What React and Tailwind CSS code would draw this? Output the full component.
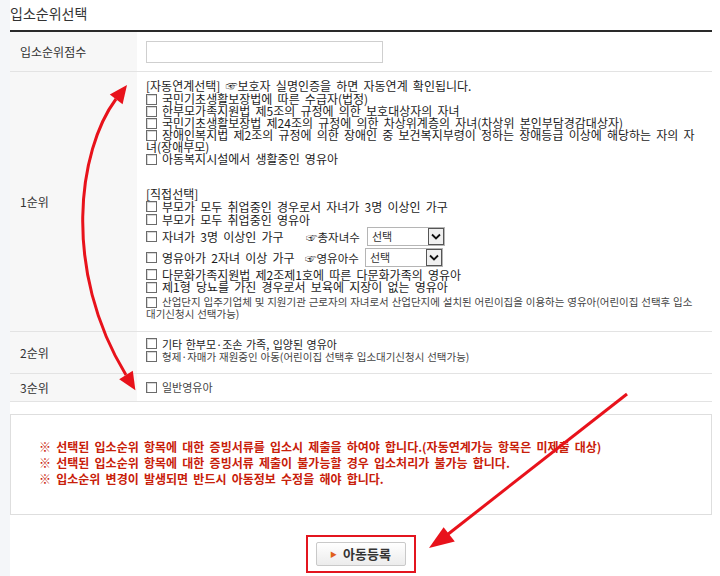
import React from 'react';

function Cb() {
  return (
    <span className="inline-block w-[11px] h-[11px] shrink-0 border border-[#6b6b6b] bg-white shadow-[inset_1px_1px_0_#d8d8d8] mr-[5px]" />
  );
}

function Line({ children, h = 'h-[12px]', cb = true, small = false }) {
  return (
    <div className={`flex items-center whitespace-nowrap ${h} ${small ? 'text-[10.5px] [word-spacing:0.5px] text-[#444]' : ''}`}>
      {cb && <Cb />}
      <span className="leading-[12px]">{children}</span>
    </div>
  );
}

function Select() {
  return (
    <div className="flex items-center w-[78px] h-[19px] border border-[#b5b5b5] bg-white">
      <span className="flex-1 pl-[4px] text-[11px] leading-[17px] text-[#333]">선택</span>
      <span className="flex items-center justify-center w-[16px] h-[17px] border border-[#555] bg-[#f0f0f0]">
        <svg width="10" height="7" viewBox="0 0 10 7">
          <path d="M1 1.5 L5 5.5 L9 1.5" fill="none" stroke="#111" strokeWidth="1.8" />
        </svg>
      </span>
    </div>
  );
}

export default function App() {
  return (
    <div className="relative w-[720px] h-[576px] overflow-hidden bg-white flex font-['Noto_Sans_CJK_KR',sans-serif] text-[#333]">
      <div className="w-[10px] shrink-0 bg-[#f4f6f9]" />

      <div className="w-[702px] shrink-0">
        <h3 className="h-[30px] pt-[4px] text-[14px] leading-[18px] text-[#333]">입소순위선택</h3>

        <div className="border-t-2 border-[#2a2a2a] text-[12px] [word-spacing:2.5px] text-[#1c1c1c]">
          {/* 입소순위점수 */}
          <div className="flex h-[40px] border-b border-[#e3e3e3]">
            <div className="w-[127px] shrink-0 bg-[#f7f7f7] pl-[10px] flex items-center text-[#333]">입소순위점수</div>
            <div className="flex items-center pl-[9px]">
              <div className="w-[237px] h-[22px] border border-[#cfcfcf] bg-white" />
            </div>
          </div>

          {/* 1순위 */}
          <div className="flex h-[260px] border-b border-[#e3e3e3]">
            <div className="w-[127px] shrink-0 bg-[#f7f7f7] pl-[10px] flex items-center text-[#333]">1순위</div>
            <div className="pl-[9px] pt-[6px]">
              <Line cb={false} h="h-[15px]">[자동연계선택] ☞보호자 실명인증을 하면 자동연계 확인됩니다.</Line>
              <Line>국민기초생활보장법에 따른 수급자(법정)</Line>
              <Line>한부모가족지원법 제5조의 규정에 의한 보호대상자의 자녀</Line>
              <Line>국민기초생활보장법 제24조의 규정에 의한 차상위계층의 자녀(차상위 본인부담경감대상자)</Line>
              <Line>장애인복지법 제2조의 규정에 의한 장애인 중 보건복지부령이 정하는 장애등급 이상에 해당하는 자의 자</Line>
              <Line cb={false}>녀(장애부모)</Line>
              <Line>아동복지시설에서 생활중인 영유아</Line>

              <div className="mt-[22px]">
                <Line cb={false} h="h-[13px]">[직접선택]</Line>
                <Line h="h-[13px]">부모가 모두 취업중인 경우로서 자녀가 3명 이상인 가구</Line>
                <Line h="h-[13px]">부모가 모두 취업중인 영유아</Line>
                <div className="flex items-center h-[21px] whitespace-nowrap">
                  <Cb />
                  <span className="w-[144px] leading-[12px]">자녀가 3명 이상인 가구</span>
                  <span className="w-[61px] leading-[12px] text-[11.5px] [word-spacing:0px]">☞총자녀수</span>
                  <Select />
                </div>
                <div className="flex items-center h-[21px] whitespace-nowrap">
                  <Cb />
                  <span className="w-[143px] leading-[12px]">영유아가 2자녀 이상 가구</span>
                  <span className="w-[60px] leading-[12px] text-[11.5px] [word-spacing:0px]">☞영유아수</span>
                  <Select />
                </div>
                <Line h="h-[13px]">다문화가족지원법 제2조제1호에 따른 다문화가족의 영유아</Line>
                <Line h="h-[12px]">제1형 당뇨를 가진 경우로서 보육에 지장이 없는 영유아</Line>
                <div className="mt-[3px]">
                  <Line small>산업단지 입주기업체 및 지원기관 근로자의 자녀로서 산업단지에 설치된 어린이집을 이용하는 영유아(어린이집 선택후 입소</Line>
                  <Line small cb={false}>대기신청시 선택가능)</Line>
                </div>
              </div>
            </div>
          </div>

          {/* 2순위 */}
          <div className="flex h-[42px] border-b border-[#e3e3e3]">
            <div className="w-[127px] shrink-0 bg-[#f7f7f7] pl-[10px] flex items-center text-[#333]">2순위</div>
            <div className="pl-[9px] pt-[5px]">
              <Line h="h-[13px]"><span className="text-[11px] [word-spacing:1px]">기타 한부모·조손 가족, 입양된 영유아</span></Line>
              <Line h="h-[13px]" small>형제·자매가 재원중인 아동(어린이집 선택후 입소대기신청시 선택가능)</Line>
            </div>
          </div>

          {/* 3순위 */}
          <div className="flex h-[28px] border-b border-[#e3e3e3]">
            <div className="w-[127px] shrink-0 bg-[#f7f7f7] pl-[10px] flex items-center text-[#333]">3순위</div>
            <div className="pl-[9px] flex items-center">
              <Line h="h-[13px]" small><span className="text-[11px]">일반영유아</span></Line>
            </div>
          </div>
        </div>

        {/* 안내 */}
        <div className="mt-[12px] h-[101px] border border-[#dedede] pl-[28px] pt-[24px] text-[12px] [word-spacing:2.5px] leading-[16px] font-bold text-[#c8200a] whitespace-nowrap">
          <p>※ 선택된 입소순위 항목에 대한 증빙서류를 입소시 제출을 하여야 합니다.(자동연계가능 항목은 미제출 대상)</p>
          <p>※ 선택된 입소순위 항목에 대한 증빙서류 제출이 불가능할 경우 입소처리가 불가능 합니다.</p>
          <p>※ 입소순위 변경이 발생되면 반드시 아동정보 수정을 해야 합니다.</p>
        </div>

        <div className="flex justify-center pt-[20px] pb-[3px] border-b border-[#ecebf5]">
          <div className="border-2 border-[#e3151f] px-[8px] py-[5px]">
            <button className="flex items-center w-[90px] h-[24px] pl-[13px] border border-[#c9c9c9] rounded-[2px] bg-gradient-to-b from-white to-[#ececec] text-[13px] font-bold text-[#333]">
              <span className="text-[7px] text-[#e0601c] mr-[6px]">▶</span>
              아동등록
            </button>
          </div>
        </div>
      </div>

      {/* red annotation arrows */}
      <svg className="absolute inset-0 pointer-events-none" width="720" height="576" viewBox="0 0 720 576">
        <path d="M116 99 C 78 150 62 270 126 375" fill="none" stroke="#e8121b" strokeWidth="3" />
        <polygon points="127,85 122.6,104.2 109.8,94.6" fill="#e8121b" />
        <polygon points="135.4,390.3 132.8,370.8 119.2,379.2" fill="#e8121b" />
        <line x1="627" y1="394" x2="447" y2="535" stroke="#e8121b" strokeWidth="3" />
        <polygon points="429,548 454.8,541.5 443.6,527.3" fill="#e8121b" />
      </svg>
    </div>
  );
}
